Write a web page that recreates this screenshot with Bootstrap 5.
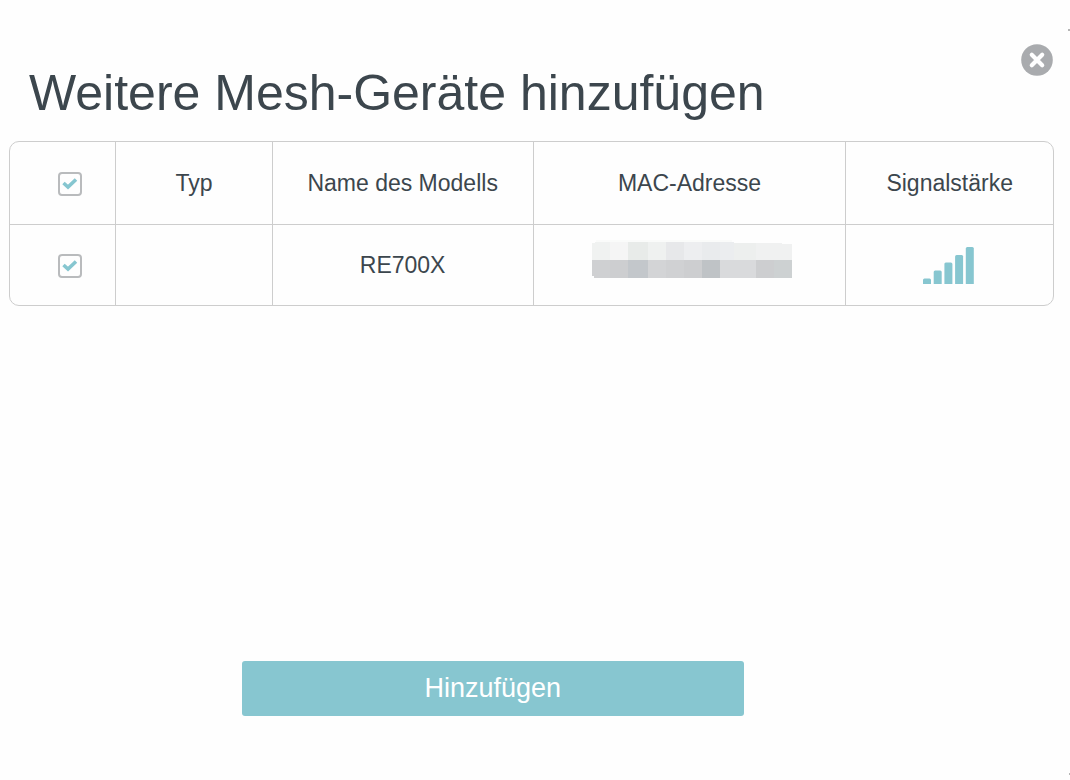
<!DOCTYPE html>
<html lang="de">
<head>
<meta charset="utf-8">
<meta name="viewport" content="width=device-width, initial-scale=1">
<title>Weitere Mesh-Geräte hinzufügen</title>
<link href="https://cdn.jsdelivr.net/npm/bootstrap@5.3.0/dist/css/bootstrap.min.css" rel="stylesheet">
<style>
  body { font-family: "Liberation Sans", Arial, sans-serif; color: #3c464d; background: #fefefe; }
  .dialog-page { padding: 44px 16px 64px 9px; }
  .dialog-title { font-size: 50px; line-height: 56px; padding: 21px 0 0 20px; margin-bottom: 20px; color: #3c464d; }
  .close-btn { width: 32px; height: 32px; margin-right: 1px; }
  .device-frame { border: 1px solid #cdcdcd; border-radius: 10px; }
  .device-table { table-layout: fixed; font-size: 23px; line-height: 28px; border-collapse: separate; border-spacing: 0; }
  .device-table th, .device-table td { padding: 0; font-weight: 400; text-align: center; vertical-align: middle; }
  .device-table th { height: 83px; border-bottom: 1px solid #cdcdcd; }
  .device-table td { height: 80px; }
  .device-table tr > * + * { border-left: 1px solid #cdcdcd; }
  .device-table tr > :first-child { padding: 2px 0 0 14px; }
  .col-check { width: 10.1%; } .col-type { width: 15%; } .col-model { width: 25%; } .col-mac { width: 30%; }
  .device-check {
    appearance: none; display: block; width: 24px; height: 24px; margin: 0 auto; padding: 0;
    border: 2px solid #b9bbbd; border-radius: 4px;
    background: #fefefe url("data:image/svg+xml,%3Csvg xmlns='http://www.w3.org/2000/svg' viewBox='0 0 20 20'%3E%3Cpath d='M3.500 9l4.500 4 8-7.500' fill='none' stroke='%2386c6d0' stroke-width='3.600'/%3E%3C/svg%3E") center / 20px 20px no-repeat;
  }
  .add-btn { width: 48%; height: 55px; margin-left: 233px; font-size: 27px; line-height: 32px; padding: 0 0 2px; border: 0; border-radius: 3px; background: #87c6d0; color: #fff; }
  .add-btn:hover { background: #78bac5; color: #fff; }
  .edge-mark { width: 2px; height: 2px; background: #b5b5b5; }
  .edge-top { top: 29px; }
  .edge-bottom { bottom: 5px; width: 1px; }
</style>
<script src="https://cdn.jsdelivr.net/npm/bootstrap@5.3.0/dist/js/bootstrap.bundle.min.js"></script>
</head>
<body>
<main class="dialog-page position-relative d-flex flex-column min-vh-100">
  <span class="edge-mark edge-top position-absolute end-0"></span>
  <span class="edge-mark edge-bottom position-absolute end-0"></span>
  <header class="d-flex justify-content-between align-items-start">
    <h1 class="dialog-title fw-normal">Weitere Mesh-Geräte hinzufügen</h1>
    <button type="button" class="close-btn btn p-0 border-0 d-flex flex-shrink-0" aria-label="Schließen">
      <svg width="32" height="32" viewBox="0 0 32 32" aria-hidden="true">
        <circle cx="16" cy="16" r="15.800" fill="#a9abae"/>
        <path d="M10.800 10.800l10.400 10.400M21.200 10.800l-10.400 10.400" stroke="#fff" stroke-width="4.200" stroke-linecap="round"/>
      </svg>
    </button>
  </header>
  <div class="device-frame">
    <table class="device-table w-100">
      <thead>
        <tr>
          <th scope="col" class="col-check"><input type="checkbox" class="device-check" aria-label="Alle auswählen" checked></th>
          <th scope="col" class="col-type">Typ</th>
          <th scope="col" class="col-model">Name des Modells</th>
          <th scope="col" class="col-mac">MAC-Adresse</th>
          <th scope="col">Signalstärke</th>
        </tr>
      </thead>
      <tbody>
        <tr>
          <td><input type="checkbox" class="device-check" aria-label="RE700X auswählen" checked></td>
          <td></td>
          <td>RE700X</td>
          <td>
            <svg class="d-block mx-auto" width="206" height="52" viewBox="0 0 206 52" shape-rendering="crispEdges" aria-hidden="true">
              <path d="M10 1H146v2H10z" fill="#fafbfa"/>
              <path d="M6 4h3V3h15v18H6z" fill="#f0f2f1"/>
              <path d="M24 3h18v18H24z" fill="#f5f5f5"/>
              <path d="M42 3h20v18H42z" fill="#e8ebe9"/>
              <path d="M62 3h18v18H62z" fill="#eff1f0"/>
              <path d="M80 3h18v18H80z" fill="#e7e8ea"/>
              <path d="M98 3h18v18H98z" fill="#edeef0"/>
              <path d="M116 3h18v18h-18z" fill="#e9ebed"/>
              <path d="M134 3h14v18h-14z" fill="#ebedef"/>
              <path d="M148 4h22v17h-22z" fill="#edefee"/>
              <path d="M170 4h26v1h10v16h-36z" fill="#f0f1f1"/>
              <path d="M6 21h18v18H8v-2H6z" fill="#cfd0d2"/>
              <path d="M24 21h18v18H24z" fill="#cdced0"/>
              <path d="M42 21h20v18H42z" fill="#c3c7cb"/>
              <path d="M62 21h18v18H62z" fill="#d3d4d6"/>
              <path d="M80 21h18v18H80z" fill="#d0d1d3"/>
              <path d="M98 21h18v18H98z" fill="#cdced0"/>
              <path d="M116 21h18v18h-18z" fill="#bfc3c6"/>
              <path d="M134 21h36v18h-36z" fill="#d9dadc"/>
              <path d="M170 21h18v18h-18z" fill="#cdced0"/>
              <path d="M188 21h18v18h-18z" fill="#cdd1d2"/>
            </svg>
          </td>
          <td>
            <svg class="d-block mx-auto" width="54" height="40" viewBox="0 0 54 40" role="img" aria-label="Signal 5 von 5" fill="#87c6d0">
              <path d="M0 39v-4q0-1.500 1.500-1.500h5q1.500 0 1.500 1.500v4z"/>
              <path d="M10.700 39V27q0-1.500 1.500-1.500h5q1.500 0 1.500 1.500v12z"/>
              <path d="M21.400 39V19q0-1.500 1.500-1.500h5q1.500 0 1.500 1.500v20z"/>
              <path d="M32.100 39V11.500q0-1.500 1.500-1.500h5q1.500 0 1.500 1.500V39z"/>
              <path d="M42.800 39V3.500q0-1.500 1.500-1.500h5q1.500 0 1.500 1.500V39z"/>
            </svg>
          </td>
        </tr>
      </tbody>
    </table>
  </div>
  <button type="button" class="add-btn btn mt-auto">Hinzufügen</button>
</main>
</body>
</html>
